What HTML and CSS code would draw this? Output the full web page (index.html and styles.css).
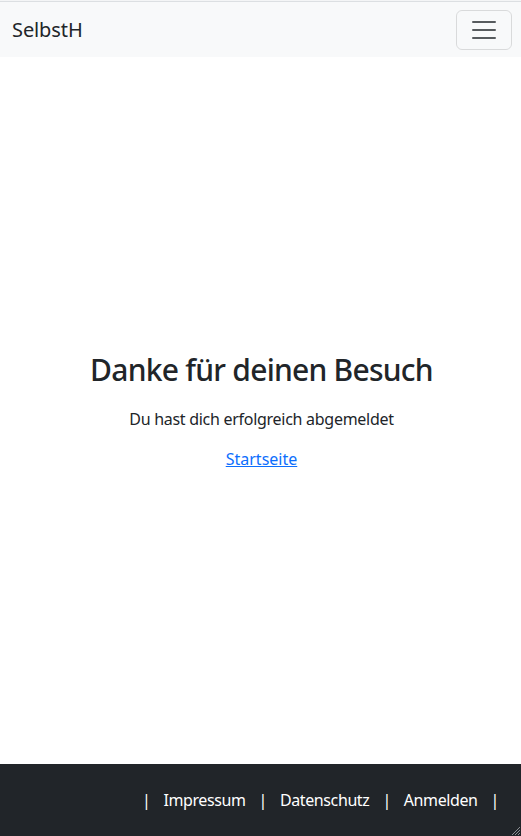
FILE: index.html
```html
<!DOCTYPE html>
<html lang="de">
<head>
<meta charset="utf-8">
<title>SelbstH</title>
<link rel="stylesheet" href="styles.css">
</head>
<body>
<div class="page">
  <nav class="navbar">
    <a class="brand" href="#">SelbstH</a>
    <button class="toggler" type="button" aria-label="Navigation">
      <svg width="30" height="30" viewBox="0 0 30 30" aria-hidden="true">
        <path d="M4 7h22M4 15h22M4 23h22" stroke="rgba(33,37,41,0.75)" stroke-width="2" stroke-linecap="round" fill="none"/>
      </svg>
    </button>
  </nav>
  <main class="main">
    <h1 class="title">Danke für deinen Besuch</h1>
    <p class="lead">Du hast dich erfolgreich abgemeldet</p>
    <p class="lead"><a class="link" href="#">Startseite</a></p>
  </main>
  <footer class="footer">
    <div class="footer-links">
      <span class="sep">|</span>
      <a class="flink" href="#">Impressum</a>
      <span class="sep">|</span>
      <a class="flink" href="#">Datenschutz</a>
      <span class="sep">|</span>
      <a class="flink" href="#">Anmelden</a>
      <span class="sep">|</span>
    </div>
    <svg class="grip" width="12" height="12" viewBox="0 0 12 12" aria-hidden="true">
      <path d="M11 3L3 11M11 6L6 11M11 9L9 11" stroke="#8a8d91" stroke-width="1" fill="none"/>
    </svg>
  </footer>
</div>
</body>
</html>
```

FILE: styles.css
```css
* { box-sizing: border-box; }
html, body {
  margin: 0;
  padding: 0;
  height: 100%;
}
body {
  font-family: "Noto Sans", "Open Sans", sans-serif;
  color: #212529;
  background: #fff;
  font-size: 16px;
  line-height: 1.5;
}
.page {
  min-height: 100vh;
  display: flex;
  flex-direction: column;
}
.navbar {
  display: flex;
  align-items: center;
  justify-content: space-between;
  height: 57px;
  padding: 2px 9px 0 12px;
  background: linear-gradient(#f4f5f6 0 1px, #dcdfe2 1px 2px, #f8f9fa 2px);
}
.brand {
  font-size: 20px;
  color: #212529;
  text-decoration: none;
  line-height: 30px;
  letter-spacing: -0.1px;
}
.toggler {
  width: 56px;
  height: 40px;
  padding: 0;
  display: flex;
  align-items: center;
  justify-content: center;
  background: transparent;
  border: 1px solid rgba(0,0,0,0.12);
  border-radius: 6px;
}
.main {
  flex: 1;
  display: flex;
  flex-direction: column;
  align-items: center;
  justify-content: center;
  text-align: center;
  padding: 17px 11px 0 13px;
}
.title {
  font-size: 30px;
  font-weight: 500;
  line-height: 1.2;
  letter-spacing: -0.75px;
  margin: 0 0 19px;
}
.lead {
  margin: 0 0 16px;
  letter-spacing: -0.28px;
}
.link {
  color: #0d6efd;
  text-decoration: underline;
  letter-spacing: 0;
}
.footer {
  position: relative;
  background: #212529;
  color: #fff;
  height: 72px;
  display: flex;
  align-items: center;
  justify-content: flex-end;
  padding: 0 22px 0 12px;
}
.footer-links {
  display: flex;
  align-items: center;
  gap: 13px;
  letter-spacing: -0.4px;
}
.sep {
  color: #fff;
}
.flink {
  color: #fff;
  text-decoration: none;
}
.grip {
  position: absolute;
  right: 0;
  bottom: 0;
}
```
